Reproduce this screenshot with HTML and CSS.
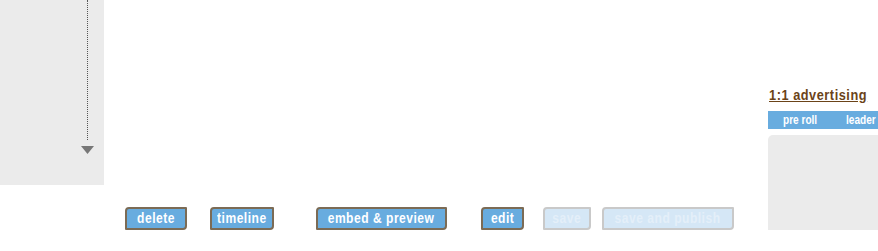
FILE: index.html
```html
<!DOCTYPE html>
<html>
<head>
<meta charset="utf-8">
<link rel="stylesheet" href="styles.css">
</head>
<body>
<div class="page">
  <div class="left-col">
    <div class="side-panel">
      <div class="dotline"></div>
      <svg class="arrow" width="13" height="8" viewBox="0 0 13 8"><polygon points="0,0 13,0 6.5,8" fill="#777777"/></svg>
    </div>
  </div>
  <div class="mid-col">
    <div class="btn-row">
      <span class="btn b-delete"><span class="lbl">delete</span></span>
      <span class="btn b-timeline"><span class="lbl">timeline</span></span>
      <span class="btn b-embed"><span class="lbl">embed &amp; preview</span></span>
      <span class="btn b-edit"><span class="lbl">edit</span></span>
      <span class="btn disabled b-save"><span class="lbl">save</span></span>
      <span class="btn disabled b-publish"><span class="lbl">save and publish</span></span>
    </div>
  </div>
  <div class="right-col">
    <div class="ad-title"><span class="title-lbl">1:1 advertising</span></div>
    <div class="ad-tabs"><span class="tab tab-pre">pre roll</span><span class="tab tab-leader">leader</span></div>
    <div class="ad-box"></div>
  </div>
</div>
</body>
</html>
```
FILE: styles.css
```css
html, body {
  margin: 0;
  padding: 0;
  background: #ffffff;
}
.page {
  display: flex;
  width: 878px;
  height: 251px;
  overflow: hidden;
  font-family: "Liberation Sans", Arial, sans-serif;
}
.left-col {
  width: 104px;
  flex: none;
}
.side-panel {
  width: 104px;
  height: 185px;
  background: #ebebeb;
  display: flex;
  flex-direction: column;
}
.dotline {
  margin-left: 87px;
  width: 0;
  height: 140px;
  border-left: 1px dotted #555555;
}
.arrow {
  display: block;
  margin-left: 81px;
  margin-top: 6px;
}
.mid-col {
  flex: 1;
  padding-top: 207px;
}
.btn-row {
  display: flex;
}
.btn {
  box-sizing: border-box;
  height: 23px;
  line-height: 19px;
  text-align: center;
  background: #68acdf;
  border: 2px solid #7b6b55;
  border-radius: 4px 1px 4px 1px;
  color: #ffffff;
  font-weight: bold;
  font-size: 14px;
  letter-spacing: 0.6px;
  white-space: nowrap;
}
.lbl {
  display: inline-block;
  transform: scaleX(0.86);
}
.btn.disabled {
  background: #d5e7f6;
  border-color: #c9c9c9;
  color: #e4eff9;
}
.b-delete { margin-left: 21px; width: 62px; }
.b-timeline { margin-left: 23px; width: 64px; }
.b-embed { margin-left: 42px; width: 131px; }
.b-edit { margin-left: 34px; width: 43px; }
.b-save { margin-left: 19px; width: 48px; }
.b-publish { margin-left: 11px; width: 132px; }
.right-col {
  width: 110px;
  flex: none;
  padding-top: 87px;
}
.ad-title {
  margin-left: 1px;
  font-weight: bold;
  font-size: 14px;
  letter-spacing: 0.6px;
  line-height: 16px;
  color: #6b4318;
  white-space: nowrap;
}
.title-lbl {
  display: inline-block;
  text-decoration: underline;
  transform: scaleX(0.91);
  transform-origin: left center;
}
.ad-tabs {
  margin-top: 8px;
  height: 18px;
  line-height: 18px;
  background: #68acdf;
  color: #ffffff;
  font-weight: bold;
  font-size: 12px;
  display: flex;
  white-space: nowrap;
}
.tab {
  display: inline-block;
  transform: scaleX(0.84);
  transform-origin: left center;
}
.tab-pre { margin-left: 15px; width: 34px; }
.tab-leader { margin-left: 29px; width: 28px; }
.ad-box {
  margin-top: 6px;
  height: 95px;
  background: #ebebeb;
  border-radius: 5px 0 0 0;
}
```
